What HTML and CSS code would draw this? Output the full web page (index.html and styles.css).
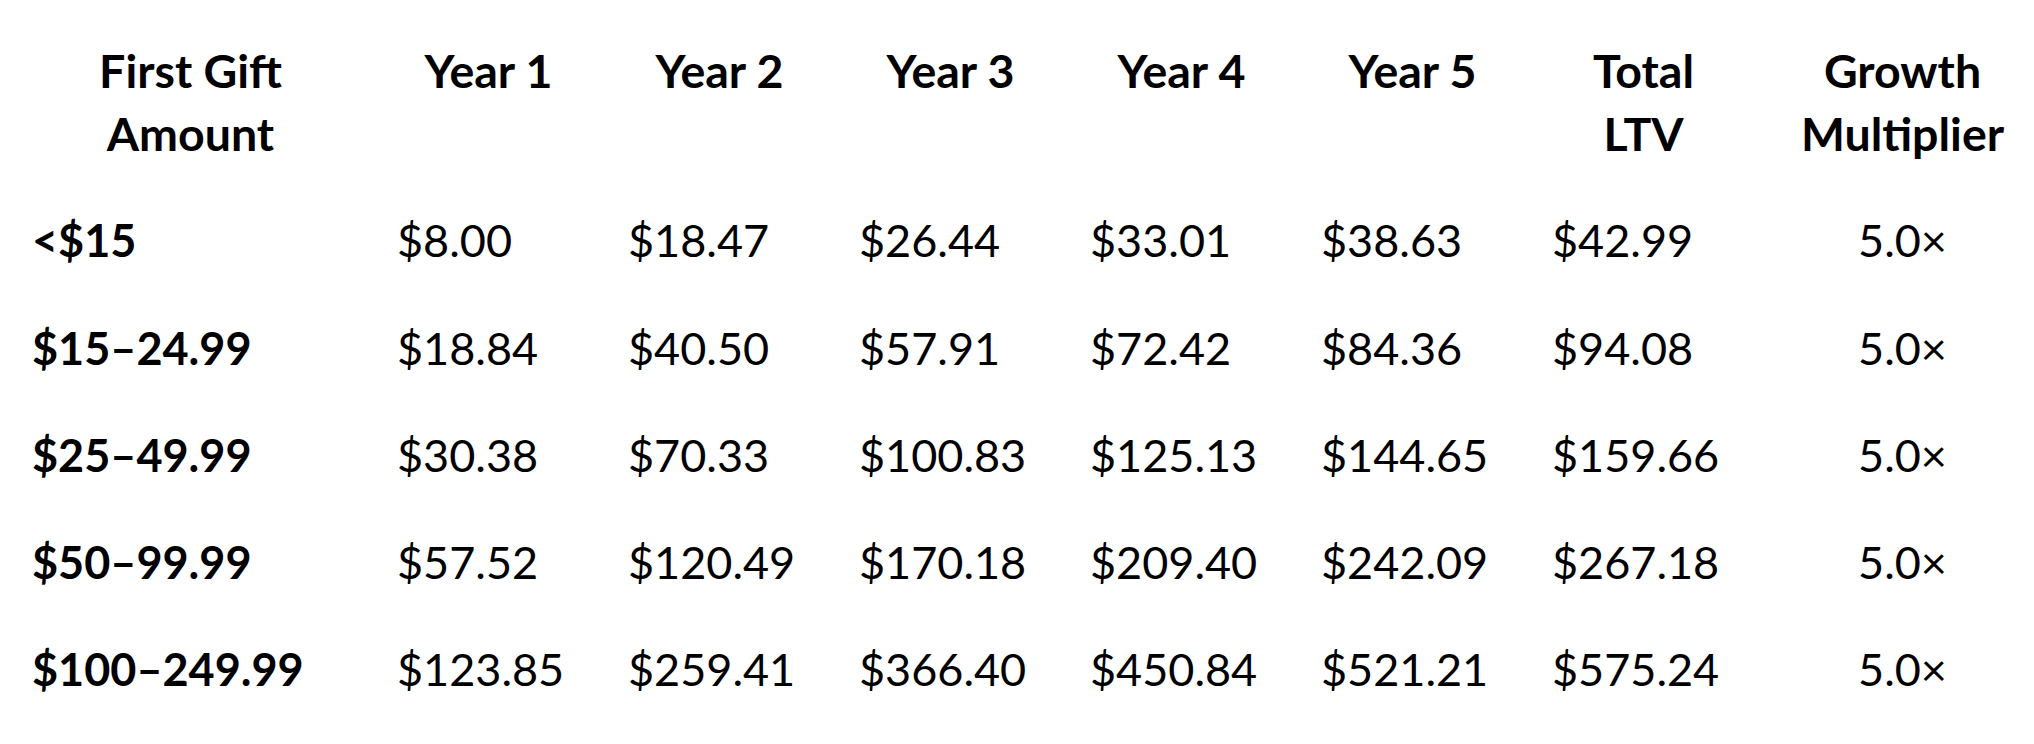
FILE: index.html
```html
<!DOCTYPE html>
<html lang="en">
<head>
<meta charset="utf-8">
<title>First Gift LTV</title>
<link rel="stylesheet" href="styles.css">
</head>
<body>
<div class="wrap">
<table class="ltv">
  <colgroup>
    <col class="c-first">
    <col class="c-year">
    <col class="c-year">
    <col class="c-year">
    <col class="c-year">
    <col class="c-year">
    <col class="c-year">
    <col class="c-mult">
  </colgroup>
  <thead>
    <tr>
      <th>First Gift Amount</th>
      <th>Year 1</th>
      <th>Year 2</th>
      <th>Year 3</th>
      <th>Year 4</th>
      <th>Year 5</th>
      <th>Total LTV</th>
      <th class="mult">Growth Multiplier</th>
    </tr>
  </thead>
  <tbody>
    <tr>
      <td class="band">&lt;$15</td>
      <td>$8.00</td><td>$18.47</td><td>$26.44</td><td>$33.01</td><td>$38.63</td><td>$42.99</td>
      <td class="mult">5.0×</td>
    </tr>
    <tr>
      <td class="band">$15–24.99</td>
      <td>$18.84</td><td>$40.50</td><td>$57.91</td><td>$72.42</td><td>$84.36</td><td>$94.08</td>
      <td class="mult">5.0×</td>
    </tr>
    <tr>
      <td class="band">$25–49.99</td>
      <td>$30.38</td><td>$70.33</td><td>$100.83</td><td>$125.13</td><td>$144.65</td><td>$159.66</td>
      <td class="mult">5.0×</td>
    </tr>
    <tr>
      <td class="band">$50–99.99</td>
      <td>$57.52</td><td>$120.49</td><td>$170.18</td><td>$209.40</td><td>$242.09</td><td>$267.18</td>
      <td class="mult">5.0×</td>
    </tr>
    <tr>
      <td class="band">$100–249.99</td>
      <td>$123.85</td><td>$259.41</td><td>$366.40</td><td>$450.84</td><td>$521.21</td><td>$575.24</td>
      <td class="mult">5.0×</td>
    </tr>
  </tbody>
</table>
</div>
</body>
</html>
```
FILE: styles.css
```css
html, body {
  margin: 0;
  padding: 0;
  background: #ffffff;
}

body {
  font-family: Lato, "Noto Sans", "Liberation Sans", sans-serif;
  color: #000000;
}

.wrap {
  padding: 17px 8px 0 8px;
}

.ltv {
  width: 100%;
  table-layout: fixed;
  border-collapse: collapse;
  font-size: 45px;
  line-height: 63px;
}

.c-first { width: 365px; }
.c-year { width: 231px; }
.c-mult { width: 267px; }

.ltv th,
.ltv td {
  padding: 22px 24px 22.25px 24px;
  vertical-align: baseline;
}

.ltv th {
  font-size: 46.5px;
  font-weight: 700;
  text-align: center;
}

.ltv td {
  font-weight: 400;
  text-align: left;
  white-space: nowrap;
}

.ltv td.band {
  font-weight: 700;
}

.ltv td.mult {
  text-align: center;
}

.ltv th.mult,
.ltv td.mult {
  padding-left: 34px;
  padding-right: 14px;
}
```
